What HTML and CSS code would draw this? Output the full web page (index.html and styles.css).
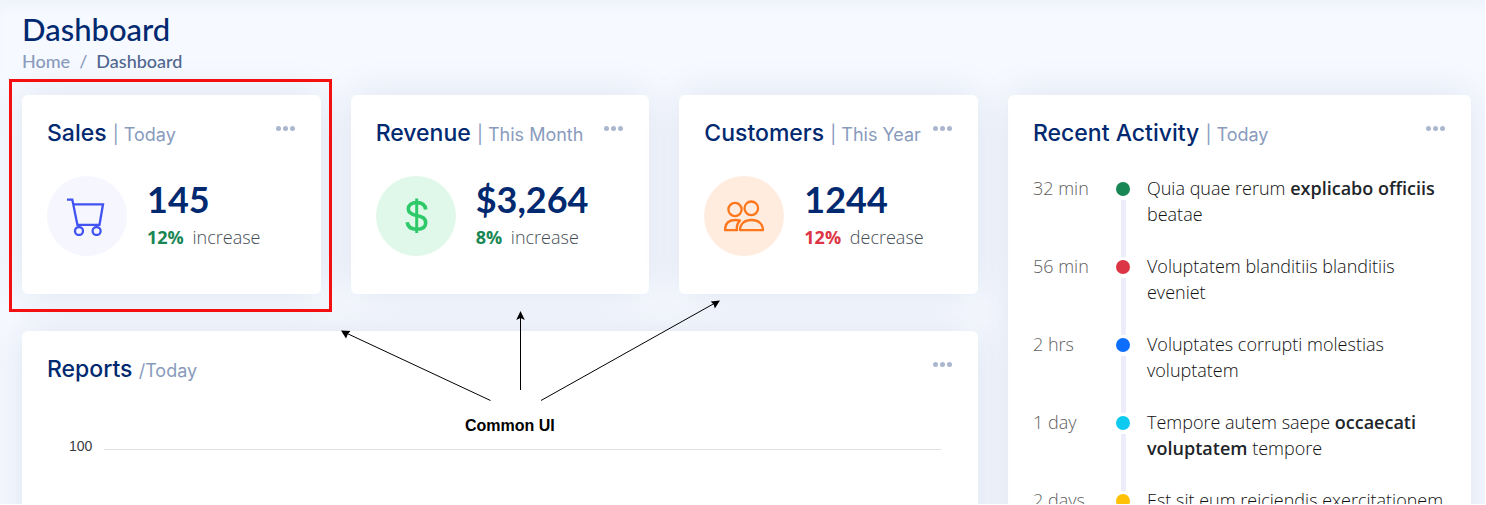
FILE: index.html
```html
<!DOCTYPE html>
<html lang="en">
<head>
<meta charset="utf-8">
<title>Dashboard</title>
<link rel="stylesheet" href="styles.css">
</head>
<body>
<main class="main">
  <header class="page-title">
    <h1>Dashboard</h1>
    <nav aria-label="Breadcrumb">
      <ol class="breadcrumb">
        <li><a href="#">Home</a></li>
        <li aria-current="page">Dashboard</li>
      </ol>
    </nav>
  </header>

  <div class="dashboard">
    <div class="left-column">
      <div class="stats">
        <section class="card stat highlighted">
          <div class="card-head">
            <h2>Sales <span>| Today</span></h2>
            <button class="more" type="button" aria-label="Sales options"><i></i><i></i><i></i></button>
          </div>
          <div class="stat-body">
            <div class="stat-icon sales">
              <svg viewBox="0 0 40 40" fill="none" stroke="currentColor" stroke-width="2.3"><path d="M0 3.6H5.3L10.4 28.8H32.5L36 8.3H6.3"/><circle cx="12" cy="35" r="4"/><circle cx="29.6" cy="35" r="4"/></svg>
            </div>
            <div>
              <p class="value">145</p>
              <p class="trend"><b class="up">12%</b> <span>increase</span></p>
            </div>
          </div>
        </section>

        <section class="card stat">
          <div class="card-head">
            <h2>Revenue <span>| This Month</span></h2>
            <button class="more" type="button" aria-label="Revenue options"><i></i><i></i><i></i></button>
          </div>
          <div class="stat-body">
            <div class="stat-icon revenue">
              <svg viewBox="0 0 40 40" fill="none" stroke="currentColor" stroke-width="3.6"><path d="M29.7 13.5C29.2 8.7 26 6.6 20.7 6.6C15.3 6.6 12.3 9 12.3 13C12.3 17.3 16 18.5 20.7 19.5C26 20.7 29.7 22 29.7 26.7C29.7 31.3 26 33.3 20.7 33.3C15 33.3 11.7 31 11.2 26.3"/><path d="M20.7 2.5V37" stroke-width="3"/></svg>
            </div>
            <div>
              <p class="value">$3,264</p>
              <p class="trend"><b class="up">8%</b> <span>increase</span></p>
            </div>
          </div>
        </section>

        <section class="card stat">
          <div class="card-head">
            <h2>Customers <span>| This Year</span></h2>
            <button class="more" type="button" aria-label="Customers options"><i></i><i></i><i></i></button>
          </div>
          <div class="stat-body">
            <div class="stat-icon customers">
              <svg viewBox="0 0 40 40" fill="none" stroke="currentColor" stroke-width="2.3" stroke-linejoin="round"><circle cx="11" cy="13.5" r="6.6"/><circle cx="27.3" cy="12.3" r="6.8"/><path d="M16 34.2C16 27.5 21 24 27.5 24S39 27.5 39 34.2ZM13 34.2H1C1 27.5 5 24 11.5 24C13.5 24 15 24.2 16 24.6C13 27.3 12.4 31 13 34.2Z"/></svg>
            </div>
            <div>
              <p class="value">1244</p>
              <p class="trend"><b class="down">12%</b> <span>decrease</span></p>
            </div>
          </div>
        </section>
      </div>

      <section class="card reports">
        <div class="card-head">
          <h2>Reports <span>/Today</span></h2>
          <button class="more" type="button" aria-label="Reports options"><i></i><i></i><i></i></button>
        </div>
        <div class="chart">
          <span class="tick">100</span>
          <span class="gridline"></span>
        </div>
      </section>

      <div class="annotation">
        <svg viewBox="0 0 400 120" width="400" height="120" stroke="#000" fill="#000">
          <path d="M160.500 106.500L15 38.500M190.500 96V21M211 106.500L385 9" fill="none"/>
          <path d="M11 36.500L20.500 37L18 39.700L16 44.500ZM190.500 17L194.800 26L190.500 24L186.200 26ZM390 6.500L384.800 14.500L383.700 10.500L380.700 7.500Z" stroke="none"/>
        </svg>
        <strong>Common UI</strong>
      </div>
    </div>

    <section class="card activity">
      <div class="card-head">
        <h2>Recent Activity <span>| Today</span></h2>
        <button class="more" type="button" aria-label="Activity options"><i></i><i></i><i></i></button>
      </div>
      <ol class="timeline">
        <li><time>32 min</time><span class="dot green"></span><p>Quia quae rerum <b>explicabo officiis</b> beatae</p></li>
        <li><time>56 min</time><span class="dot red"></span><p>Voluptatem blanditiis blanditiis eveniet</p></li>
        <li><time>2 hrs</time><span class="dot blue"></span><p>Voluptates corrupti molestias voluptatem</p></li>
        <li><time>1 day</time><span class="dot cyan"></span><p>Tempore autem saepe <b>occaecati voluptatem</b> tempore</p></li>
        <li><time>2 days</time><span class="dot yellow"></span><p>Est sit eum reiciendis exercitationem</p></li>
      </ol>
    </section>
  </div>
</main>
</body>
</html>
```
FILE: styles.css
```css
* { box-sizing: border-box; }

body {
  margin: 0;
  padding: 0 1px 1px 0;
  height: 100vh;
  overflow: hidden;
  background: #fff;
  color: #111;
  font-family: "Open Sans", sans-serif;
}

h1, h2, p, ol { margin: 0; padding: 0; }
ol { list-style: none; }

.main {
  height: 100%;
  overflow: hidden;
  padding: 11px 14px 0 22px;
  background: #f6f9ff;
  box-shadow: inset 0 10px 20px -12px rgba(1, 41, 112, .07);
}

.page-title {
  font-family: Lato, sans-serif;
  height: 84px;
}
.page-title h1 {
  font-size: 31px;
  line-height: 36px;
  font-weight: 500;
  color: #012970;
}
.breadcrumb {
  display: flex;
  font-size: 18px;
  line-height: 28px;
  font-weight: 500;
  color: #51678f;
}
.breadcrumb a { color: #899bbd; text-decoration: none; }
.breadcrumb li + li::before {
  content: "/";
  padding: 0 9px;
  color: #899bbd;
}

.dashboard {
  display: grid;
  grid-template-columns: calc((100% + 30px) * 2 / 3 - 30px) minmax(0, 1fr);
  gap: 30px;
}
.left-column {
  position: relative;
  display: flex;
  flex-direction: column;
  gap: 37px;
}
.stats {
  display: grid;
  grid-template-columns: repeat(3, minmax(0, 1fr));
  gap: 30px;
}

.card {
  background: #fff;
  border-radius: 6px;
  box-shadow: 0 0 38px rgba(1, 41, 112, .1);
  padding: 24px 25px 38px;
}
.highlighted { position: relative; }
.highlighted::after {
  content: "";
  position: absolute;
  inset: -16px -11px -18px -13px;
  border: 3px solid #f41010;
  pointer-events: none;
}

.card-head {
  display: flex;
  justify-content: space-between;
  align-items: flex-start;
  height: 57px;
}
.card-head h2 {
  font-family: Inter, sans-serif;
  font-size: 23px;
  line-height: 28px;
  font-weight: 500;
  color: #012970;
  white-space: nowrap;
}
.card-head h2 span {
  font-size: 18px;
  font-weight: 400;
  color: #899bbd;
}
.more {
  display: flex;
  gap: 2px;
  padding: 7px 1px 8px 0;
  border: 0;
  background: none;
}
.more i {
  width: 5px;
  height: 5px;
  border-radius: 50%;
  background: #aab7cf;
}

.stat-body { display: flex; gap: 20px; }
.stat-icon {
  display: grid;
  place-items: center;
  flex: none;
  width: 80px;
  height: 80px;
  border-radius: 50%;
}
.stat-icon svg { width: 40px; height: 40px; }
.sales { color: #4154f1; background: #f6f6fe; }
.revenue { color: #2eca6a; background: #e0f8e9; }
.customers { color: #ff771d; background: #ffecdf; }

.value {
  padding-top: 1px;
  font-family: Lato, sans-serif;
  font-size: 36px;
  line-height: 44px;
  font-weight: 700;
  color: #012970;
}
.trend {
  font-size: 18px;
  line-height: 32px;
  font-weight: 300;
  color: #454d55;
}
.trend b { font-weight: 700; }
.trend span { padding-left: 4px; }
.trend .up { color: #198754; }
.trend .down { color: #dc3545; }

.reports { min-height: 300px; }
.chart {
  display: flex;
  align-items: flex-end;
  gap: 12px;
  padding: 26px 12px 0 22px;
}
.tick {
  font-family: "Liberation Sans", Arial, sans-serif;
  font-size: 14px;
  line-height: 16px;
  padding-bottom: 4px;
  color: #373d3f;
}
.gridline {
  flex: 1;
  height: 9px;
  border-top: 1px solid #e0e0e0;
}

.annotation {
  position: absolute;
  top: 199px;
  left: 308px;
  width: 400px;
  color: #000;
  font-family: "Liberation Sans", Arial, sans-serif;
  font-size: 16px;
  line-height: 24px;
}
.annotation svg { display: block; }
.annotation strong { display: block; padding-left: 135px; }

.activity .card-head { height: 56px; }
.timeline li {
  display: grid;
  grid-template-columns: 83px 15px minmax(0, 1fr);
  font-size: 18px;
  line-height: 26px;
  font-weight: 300;
}
.timeline time { color: #606060; }
.timeline p { padding: 0 0 26px 16px; }
.timeline b { font-weight: 600; color: #212529; }
.dot {
  display: flex;
  flex-direction: column;
  align-items: center;
}
.dot::before {
  content: "";
  flex: none;
  width: 14px;
  height: 14px;
  margin: 7px 0 4px;
  border-radius: 50%;
  background: currentColor;
}
.dot::after {
  content: "";
  flex: 1;
  width: 5px;
  margin-bottom: -4px;
  background: #ececfb;
}
.green { color: #198754; }
.red { color: #dc3545; }
.blue { color: #0d6efd; }
.cyan { color: #0dcaf0; }
.yellow { color: #ffc107; }
```
